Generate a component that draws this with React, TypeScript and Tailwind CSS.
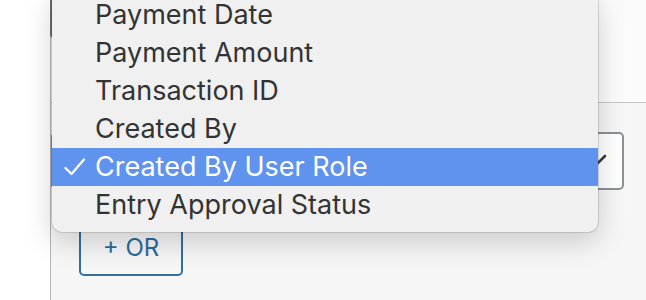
import React from "react";

const items = [
  "Payment Date",
  "Payment Amount",
  "Transaction ID",
  "Created By",
  "Created By User Role",
  "Entry Approval Status",
];

export default function App() {
  return (
    <div
      className="relative flex h-[300px] w-[646px] overflow-hidden bg-white"
      style={{ fontFamily: "Inter, 'Noto Sans', 'Liberation Sans', sans-serif" }}
    >
      {/* left white strip */}
      <div className="w-[50px] shrink-0 bg-white" />
      {/* content panel */}
      <div className="flex flex-1 flex-col border-l border-[#b4b4b4]">
        <div className="relative h-[103px] shrink-0 border-b border-[#c8c8c8] bg-[#fbfbfb]">
          <div className="absolute left-[-1px] top-[-20px] h-[58px] w-[560px] rounded-[4px] border-l-2 border-[#6f6f6f]" />
        </div>
        <div className="flex flex-1 flex-col bg-[#f6f6f6] pt-[29px]">
          <div className="relative h-[58px] w-[573px] rounded-[5px] border-2 border-[#8c8f94] bg-white">
            <svg
              className="absolute right-[14px] top-[19px]"
              width="22"
              height="14"
              viewBox="0 0 22 14"
              fill="none"
            >
              <path d="M3 3l8 8 8-8" stroke="#3c3c3c" strokeWidth="2.6" strokeLinecap="round" />
            </svg>
          </div>
          <div className="ml-[28px] mt-[30px] flex h-[56px] w-[104px] items-center justify-center rounded-[5px] border-2 border-[#2f6fa3] pb-[1px] text-[24px] text-[#2b6a9c]">
            + OR
          </div>
        </div>
      </div>

      {/* dropdown menu */}
      <div className="absolute left-[52px] top-[-10px] w-[546px] rounded-[10px] bg-[#f0f0f0] pb-[8px] pt-[6px] shadow-[0_10px_28px_rgba(0,0,0,0.18),0_0_0_1px_rgba(0,0,0,0.12)]">
        {items.map((label, i) => {
          const selected = i === 4;
          return (
            <div
              key={label}
              className={
                selected
                  ? "flex h-[38px] items-center bg-[#5f93ee] text-[27px] leading-none text-white"
                  : "flex h-[38px] items-center text-[27px] leading-none text-[#333333]"
              }
            >
              <span className="flex w-[43px] shrink-0 items-center pl-[12px]">
                {selected ? (
                  <svg width="22" height="18" viewBox="0 0 22 18" fill="none">
                    <path
                      d="M1.5 10L7.5 16L20 1.5"
                      stroke="white"
                      strokeWidth="2.2"
                      strokeLinecap="round"
                      strokeLinejoin="round"
                    />
                  </svg>
                ) : null}
              </span>
              <span className="pb-[2px]">{label}</span>
            </div>
          );
        })}
      </div>
    </div>
  );
}
